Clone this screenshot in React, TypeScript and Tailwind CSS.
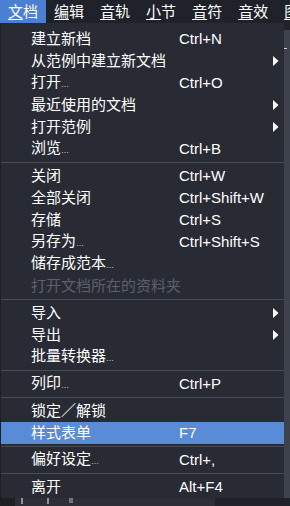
import React from "react";

type Item =
  | { kind: "sep" }
  | { kind: "item"; label: string; dots?: boolean; key?: string; sub?: boolean; disabled?: boolean; active?: boolean };

const sep: Item = { kind: "sep" };
const it = (label: string, opts: Partial<Omit<Extract<Item, { kind: "item" }>, "kind" | "label">> = {}): Item => ({
  kind: "item",
  label,
  ...opts,
});

const ITEMS: Item[] = [
  it("建立新档", { key: "Ctrl+N" }),
  it("从范例中建立新文档", { sub: true }),
  it("打开", { dots: true, key: "Ctrl+O" }),
  it("最近使用的文档", { sub: true }),
  it("打开范例", { sub: true }),
  it("浏览", { dots: true, key: "Ctrl+B" }),
  sep,
  it("关闭", { key: "Ctrl+W" }),
  it("全部关闭", { key: "Ctrl+Shift+W" }),
  it("存储", { key: "Ctrl+S" }),
  it("另存为", { dots: true, key: "Ctrl+Shift+S" }),
  it("储存成范本", { dots: true }),
  it("打开文档所在的资料夹", { disabled: true }),
  sep,
  it("导入", { sub: true }),
  it("导出", { sub: true }),
  it("批量转换器", { dots: true }),
  sep,
  it("列印", { dots: true, key: "Ctrl+P" }),
  sep,
  it("锁定／解锁"),
  it("样式表单", { key: "F7", active: true }),
  sep,
  it("偏好设定", { dots: true, key: "Ctrl+," }),
  sep,
  it("离开", { key: "Alt+F4" }),
];

const MENUBAR = ["文档", "编辑", "音轨", "小节", "音符", "音效", "图形"];

function Arrow() {
  return (
    <svg width="6" height="10" viewBox="0 0 6 10" className="block">
      <path d="M0 0 L5.5 5 L0 10 Z" fill="#ffffff" />
    </svg>
  );
}

export default function App() {
  return (
    <div
      className="w-[290px] h-[506px] overflow-hidden flex flex-col bg-[#2b2f38] text-white text-[15px]"
      style={{ fontFamily: '"Liberation Sans", "Noto Sans CJK SC", sans-serif' }}
    >
      {/* menubar */}
      <div className="flex h-[23px] shrink-0 bg-[#1f2229] whitespace-nowrap">
        {MENUBAR.map((m, i) => (
          <div
            key={m}
            className={`h-[23px] px-[8px] leading-[23px] ${i === 0 ? "bg-[#4a7fd2]" : ""}`}
          >
            <span className="underline underline-offset-[2px]">{m[0]}</span>
            {m.slice(1)}
          </div>
        ))}
      </div>

      <div className="flex flex-1 min-h-0">
        {/* dropdown */}
        <div className="w-[284px] shrink-0 bg-[#282b34] pt-[5px] border-l border-[#1c1f25]">
          {ITEMS.map((item, i) =>
            item.kind === "sep" ? (
              <div key={i} className="h-[5px] flex items-center">
                <div className="h-px w-full bg-[#474c57]" />
              </div>
            ) : (
              <div
                key={i}
                className={`h-[22px] flex items-center whitespace-nowrap ${
                  item.active ? "bg-[#5a8bd6]" : ""
                } ${item.disabled ? "text-[#5b606b]" : "text-white"}`}
              >
                <div className="pl-[30px] w-[178px] shrink-0 leading-[22px]">
                  {item.label}
                  {item.dots && <span className="text-[8px] tracking-[-0.5px]">…</span>}
                </div>
                <div className="flex-1 leading-[22px]">{item.key ?? ""}</div>
                {item.sub && (
                  <div className="w-[11px] shrink-0">
                    <Arrow />
                  </div>
                )}
              </div>
            )
          )}
        </div>

        {/* sliver of the window behind */}
        <div className="flex-1 flex flex-col">
          <div className="h-[7px] bg-[#1f2229]" />
          <div className="flex-1 bg-[#3d424c] pt-[18px]">
            <div className="w-[3px] h-px bg-[#cfd3da]" />
          </div>
        </div>
      </div>

      {/* app content peeking under the menu */}
      <div className="h-[8px] shrink-0 flex bg-[#2c2f37]">
        <div className="w-[15px] bg-[#1d1f25]" />
        <div className="flex-1 flex items-start gap-[10px] pl-[6px]">
          <div className="w-[2px] h-[6px] bg-[#8c919a]" />
          <div className="w-[2px] h-[6px] bg-[#8c919a] ml-[14px]" />
          <div className="w-[4px] h-[5px] bg-[#6f747d] ml-[10px]" />
        </div>
        <div className="w-[75px] bg-[#1f2229]" />
      </div>
    </div>
  );
}
